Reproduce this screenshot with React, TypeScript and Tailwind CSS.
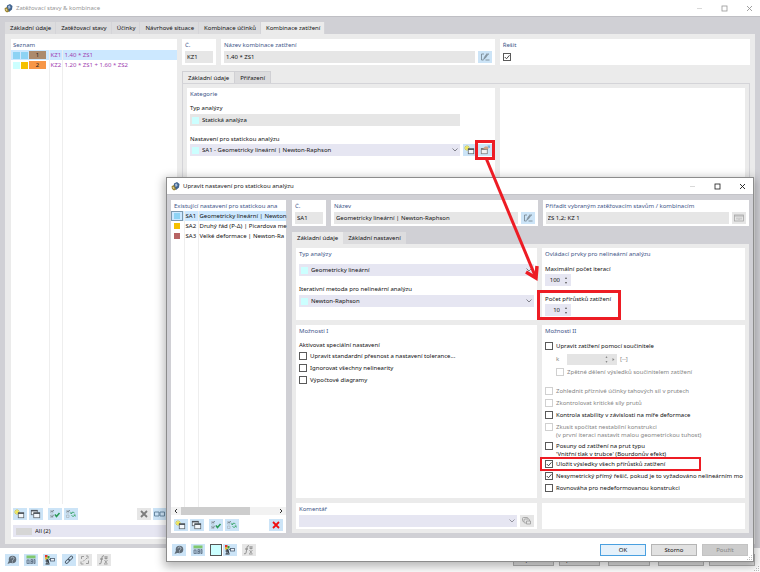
import { useState } from "react"
import type { ReactNode } from "react"
import { clsx } from "clsx"

/* ---------- icons ---------- */

function AppIcon() {
  return (
    <svg width="9" height="9" viewBox="0 0 18 18" className="shrink-0">
      <path d="M6 3 L12 0 L17 4 L16 11 L10 16 L5 11 Z" fill="#41648f" />
      <path d="M8 4 L12 3 L13 8 L9 10 Z" fill="#a9bdd6" />
      <path d="M1 9 L5 6 L8 10 L10 15 L6 17 L2 14 Z" fill="#9a8330" />
      <path d="M4 9 L7 12 L6 14 L3 12 Z" fill="#e8d9a0" />
    </svg>
  )
}

function NewIcon() {
  return (
    <svg width="14" height="12" viewBox="0 0 28 24">
      <path d="M8 2 V14 M2 8 H14 M4 4 L12 12 M12 4 L4 12" stroke="#d8c832" strokeWidth="1.6" />
      <circle cx="8" cy="8" r="3" fill="#f6e94a" />
      <rect x="10.5" y="9.5" width="11" height="10" fill="#f4f8fc" stroke="#5a6067" strokeWidth="1.5" />
      <path d="M10 10.5 H22" stroke="#464c54" strokeWidth="2.6" />
    </svg>
  )
}

function CopyIcon() {
  return (
    <svg width="14" height="12" viewBox="0 0 28 24">
      <rect x="4.5" y="4.5" width="12" height="9" fill="#f4f8fc" stroke="#5a6067" strokeWidth="1.5" />
      <path d="M4 5.5 H17" stroke="#464c54" strokeWidth="2.6" />
      <rect x="9.5" y="9.5" width="12" height="10" fill="#f4f8fc" stroke="#5a6067" strokeWidth="1.5" />
      <path d="M9 10.5 H22" stroke="#464c54" strokeWidth="2.6" />
    </svg>
  )
}

function CheckAllIcon() {
  return (
    <svg width="14" height="12" viewBox="0 0 28 24" fill="none">
      <path d="M5 5 H10 V10 H5 Z M5 14 H10 V19 H5 Z" stroke="#a4adb4" strokeWidth="1.2" />
      <path d="M6 6 L8 8 L12 4 M6 15 L8 18 L12 13" stroke="#66727c" strokeWidth="1.4" />
      <path d="M14 13 L17 17 L23 10" stroke="#2c9a57" strokeWidth="3" />
    </svg>
  )
}

function InvertIcon() {
  return (
    <svg width="14" height="12" viewBox="0 0 28 24" fill="none">
      <path d="M5 5 H10 V10 H5 Z M5 14 H10 V19 H5 Z" stroke="#a4adb4" strokeWidth="1.2" />
      <path d="M6 6 L8 8 L12 4" stroke="#66727c" strokeWidth="1.4" />
      <path d="M15 10 C16 8 19 8 21 10 M21 15 C20 17 17 17 15 15" stroke="#3aa56a" strokeWidth="2" />
      <path d="M13 7 V12 H17 Z M23 18 V13 H19 Z" fill="#3aa56a" />
    </svg>
  )
}

function CrossIcon({ color }: { color: string }) {
  return (
    <svg width="14" height="12" viewBox="0 0 28 24">
      <path d="M8 6 L20 18 M20 6 L8 18" stroke={color} strokeWidth="3.6" />
    </svg>
  )
}

function ColumnsIcon() {
  return (
    <svg width="14" height="12" viewBox="0 0 28 24">
      <path d="M3 8 H12 V16 H3 Z M14 8 H23 V16 H14 Z" fill="none" stroke="#5f7f99" strokeWidth="1.8" />
    </svg>
  )
}

function HelpIcon() {
  return (
    <svg width="14" height="12" viewBox="0 0 28 24">
      <circle cx="15" cy="11" r="7.5" fill="#5f6b76" />
      <path d="M8 13 L5 20 L13 17 Z" fill="#5f6b76" />
      <path d="M12 9 C12 5 18 5 18 9 C18 11 15 11 15 13.5 M15 15 V17" fill="none" stroke="#c9d6e2" strokeWidth="1.6" />
    </svg>
  )
}

function UnitsIcon() {
  return (
    <svg width="14" height="12" viewBox="0 0 28 24">
      <rect x="5" y="3" width="18" height="6" fill="#7fc86e" />
      <rect x="5" y="9" width="18" height="11" fill="#b3c9dc" />
      <path
        d="M6 12 H10 V19 H6 Z M14 11 H17 V15 H14 Z M14 15 H17 V19 H14 Z M20 11 H22 V19 H20 Z M12 18 V20"
        fill="none"
        stroke="#56687c"
        strokeWidth="1.4"
      />
    </svg>
  )
}

function TreeIcon() {
  return (
    <svg width="14" height="12" viewBox="0 0 28 24">
      <rect x="4" y="2" width="5" height="5" fill="#e0362c" />
      <rect x="9" y="4" width="4" height="5" fill="#3a9a3a" />
      <rect x="4" y="7" width="5" height="4" fill="#e8c020" />
      <path d="M8 10 V20 M5 20 H13 M9 11 L12 19 M5 14 H12" stroke="#2c3238" strokeWidth="2" />
      <rect x="15" y="9" width="8" height="5" fill="#eef4fa" stroke="#46586c" strokeWidth="1.6" />
      <path d="M11 11 H15" stroke="#46586c" strokeWidth="1.5" />
    </svg>
  )
}

function LinkIcon() {
  return (
    <svg width="14" height="12" viewBox="0 0 28 24" fill="none" stroke="#4b5a68" strokeWidth="2">
      <rect x="12" y="6" width="10" height="5" rx="2.5" transform="rotate(-45 17 8.5)" />
      <rect x="6" y="12" width="10" height="5" rx="2.5" transform="rotate(-45 11 14.5)" />
    </svg>
  )
}

function UnlinkIcon() {
  return (
    <svg width="14" height="12" viewBox="0 0 28 24" fill="none" stroke="#9b9b9b" strokeWidth="2">
      <path d="M7 10 V5 H12 M16 4 H20 V9 M21 13 V19 H16 M11 20 H6 V15 M10 15 L13 12 M15 11 L18 8" />
    </svg>
  )
}

function FormulaIcon() {
  return (
    <svg width="14" height="12" viewBox="0 0 28 24" fill="none" stroke="#848484" strokeWidth="2">
      <path d="M14 4 C10 2 10 8 9 13 C8 18 8 21 4 19 M6 10 H12" />
      <path d="M14 6 H22 M18 4 V11 M15 9 H21 M15 12 L20 19 M21 12 L15 19 M14 20 H21" strokeWidth="1.4" />
    </svg>
  )
}

function RenameIcon() {
  return (
    <svg width="14" height="12" viewBox="0 0 28 24" fill="none" stroke="#71808c" strokeWidth="1.6">
      <path d="M12 6 H7 V18 H11 M15 18 H23" />
      <path d="M11 17 L13 12 L18 5 L20 7 L15 14 Z" fill="#8a99a5" strokeWidth="1" />
      <path d="M20 6 H24" strokeDasharray="2 2" />
    </svg>
  )
}

function EditWindowIcon() {
  return (
    <svg width="14" height="12" viewBox="0 0 28 24">
      <rect x="6.5" y="9.5" width="12" height="10" fill="#f2f2f2" stroke="#787878" strokeWidth="1.5" />
      <path d="M6 10 H19" stroke="#6a6a6a" strokeWidth="3" />
      <path d="M10 9 L14 5 L19 5 L22 8 L17 11 Z" fill="#d0a184" />
      <path d="M19 3 H24 V8 H21 Z" fill="#7fb2e0" />
    </svg>
  )
}

function PickIcon() {
  return (
    <svg width="14" height="12" viewBox="0 0 28 24" fill="none" stroke="#a6a6a6" strokeWidth="1.6">
      <rect x="5" y="6" width="18" height="12" />
      <path d="M5 8 H23 M10 11 V15 M14 11 V16 M18 11 V15" />
    </svg>
  )
}

function LibraryIcon() {
  return (
    <svg width="14" height="12" viewBox="0 0 28 24" fill="#e4e4e4" stroke="#a2a2a2" strokeWidth="1.8">
      <rect x="5" y="5" width="11" height="8" rx="2" />
      <rect x="8" y="8" width="11" height="8" rx="2" />
      <path d="M13 12 H21 V18 H13 Z" />
    </svg>
  )
}

function Chevron({ muted }: { muted?: boolean }) {
  return (
    <svg width="6" height="4" viewBox="0 0 12 8" className="pointer-events-none shrink-0">
      <path d="M1 1 L6 6 L11 1" fill="none" stroke={muted ? "#8b8b96" : "#74747e"} strokeWidth="1.8" />
    </svg>
  )
}

function Grip() {
  return (
    <svg width="6" height="6" viewBox="0 0 6 6" fill="#bdbdbd" className="pointer-events-none">
      <path d="M4 0h1v1H4z M2 2h1v1H2z M4 2h1v1H4z M0 4h1v1H0z M2 4h1v1H2z M4 4h1v1H4z" />
    </svg>
  )
}

/* ---------- shared controls ---------- */

interface ToolButtonProps {
  label: string
  disabled?: boolean
  children: ReactNode
}

function ToolButton({ label, disabled, children }: ToolButtonProps) {
  return (
    <button
      type="button"
      aria-label={label}
      disabled={disabled}
      className={clsx("flex h-3 w-3.5 shrink-0 items-center justify-center", disabled ? "bg-[#e6e6e6]" : "bg-[#cce4f7]")}
    >
      {children}
    </button>
  )
}

interface TitleBarProps {
  title: string
  active?: boolean
}

function TitleBar({ title, active }: TitleBarProps) {
  return (
    <header
      className={clsx(
        "flex h-4 shrink-0 items-center gap-[3px] bg-white pl-1",
        active ? "text-[#1a1a1a]" : "text-[#969696]",
      )}
    >
      <AppIcon />
      <h1 className="flex-1">{title}</h1>
      <button type="button" aria-label="Minimalizovat" disabled className="flex w-[22px] justify-center">
        <svg width="7" height="7" viewBox="0 0 7 7">
          <path d="M1 3.5 H6" stroke="#d9d9d9" />
        </svg>
      </button>
      <button type="button" aria-label="Maximalizovat" className="flex w-[22px] justify-center">
        <svg width="7" height="7" viewBox="0 0 7 7">
          <rect x="1" y="1" width="5" height="5" fill="none" stroke="currentColor" strokeWidth="0.8" />
        </svg>
      </button>
      <button type="button" aria-label="Zavřít" className="flex w-[22px] justify-center">
        <svg width="7" height="7" viewBox="0 0 7 7">
          <path d="M1 1 L6 6 M6 1 L1 6" stroke="currentColor" strokeWidth="0.9" />
        </svg>
      </button>
    </header>
  )
}

interface PanelProps {
  title?: string
  className?: string
  children?: ReactNode
}

function Panel({ title, className, children }: PanelProps) {
  return (
    <section className={clsx("flex flex-col bg-white px-[3px] pb-[2px] pt-px", className)}>
      {title && <h2 className="h-2.5 shrink-0 whitespace-nowrap leading-[10px] text-[#3d5589]">{title}</h2>}
      {children}
    </section>
  )
}

interface FieldProps {
  label: string
  value: string
  swatch?: string
}

function ReadOnlyField({ label, value, swatch }: FieldProps) {
  return (
    <div className="flex h-3 min-w-0 flex-1 items-center bg-[#e6e6e6] px-[2px]">
      {swatch && <span className={clsx("mr-[3px] size-[7px] shrink-0", swatch)} />}
      <input aria-label={label} readOnly value={value} className="w-full min-w-0 bg-transparent outline-none" />
    </div>
  )
}

interface SelectFieldProps extends FieldProps {
  id: string
  muted?: boolean
}

function SelectField({ id, label, value, swatch, muted }: SelectFieldProps) {
  return (
    <div className="flex h-3 min-w-0 flex-1 items-center bg-[#e6e6f2] px-[2px]">
      {swatch && <span className={clsx("mr-[3px] size-[7px] shrink-0", swatch)} />}
      <select
        id={id}
        aria-label={label}
        disabled={muted}
        className="w-full min-w-0 flex-1 appearance-none bg-transparent outline-none"
      >
        <option>{value}</option>
      </select>
      <Chevron muted={muted} />
    </div>
  )
}

interface CheckProps {
  label: string
  hideLabel?: boolean
  checked?: boolean
  disabled?: boolean
  note?: string
}

function Check({ label, hideLabel, checked = false, disabled, note }: CheckProps) {
  const [on, setOn] = useState(checked)
  return (
    <label className={clsx("flex items-start gap-[3px]", disabled ? "text-[#858585]" : "text-[#111111]")}>
      <span className="grid shrink-0">
        <input
          type="checkbox"
          aria-label={hideLabel ? label : undefined}
          checked={on}
          disabled={disabled}
          onChange={(e) => setOn(e.target.checked)}
          className={clsx(
            "col-start-1 row-start-1 size-2 appearance-none border bg-white",
            disabled ? "border-[#d0d0d0]" : "border-[#5a5a5a]",
          )}
        />
        {on && (
          <svg width="8" height="8" viewBox="0 0 16 16" className="pointer-events-none col-start-1 row-start-1">
            <path d="M3.5 8 L7 11.5 L13 4.5" fill="none" stroke="#333333" strokeWidth="1.8" />
          </svg>
        )}
      </span>
      {!hideLabel && (
        <span className="whitespace-nowrap leading-2">
          {label}
          {note && (
            <>
              <br />
              {note}
            </>
          )}
        </span>
      )}
    </label>
  )
}

function Spinner({ id, label, initial }: { id: string; label: string; initial: number }) {
  const [value, setValue] = useState(initial)
  return (
    <div className="flex flex-col items-start">
      <label htmlFor={id} className="h-2.5 leading-[10px]">
        {label}
      </label>
      <div className="flex h-3 w-[26px] items-center bg-[#e6e6f2] pr-[2px]">
        <input
          id={id}
          inputMode="numeric"
          value={value}
          onChange={(e) => setValue(Number(e.target.value) || 0)}
          className="w-full min-w-0 flex-1 bg-transparent text-right outline-none"
        />
        <svg width="6" height="9" viewBox="0 0 12 18" className="ml-[3px] shrink-0" fill="#555555">
          <path d="M4 6 L6 2 L8 6 Z M4 12 L6 16 L8 12 Z" />
        </svg>
      </div>
    </div>
  )
}

interface TabsProps {
  label: string
  items: string[]
  active: string
  variant: "main" | "sub" | "dialog"
}

function Tabs({ label, items, active, variant }: TabsProps) {
  return (
    <div role="tablist" aria-label={label} className="flex h-3 shrink-0">
      {items.map((item) => (
        <button
          key={item}
          type="button"
          role="tab"
          aria-selected={item === active}
          className={clsx(
            "whitespace-nowrap",
            variant === "main" ? "border-r border-[#d4d4d8] pl-[5px] pr-1" : "px-[5px]",
            variant === "sub" && "border-r border-t border-[#d0d0d4] first:border-l",
            item === active ? "bg-[#ebebeb]" : "bg-[#dcdcde]",
          )}
        >
          {item}
        </button>
      ))}
    </div>
  )
}

/* ---------- background window ---------- */

const combinations = [
  { no: "1", id: "KZ1", name: "1.40 * ZS1", colors: ["bg-[#8dd3f4]", "bg-[#8dd3f4]", "bg-[#ac8a6c]"] },
  { no: "2", id: "KZ2", name: "1.20 * ZS1 + 1.60 * ZS2", colors: ["bg-[#ccffff]", "bg-[#f5c000]", "bg-[#f79646]"] },
]

function CombinationList() {
  return (
    <section className="flex w-[166px] shrink-0 flex-col bg-white pb-[2px] pt-px">
      <h2 className="h-2.5 pl-[2px] leading-[10px] text-[#3d5589]">Seznam</h2>
      <div className="grid flex-1">
        <table className="h-full w-full text-left text-[#a040b0]">
          <tbody>
            {combinations.map((row, i) => (
              <tr key={row.id} className={clsx("h-2.5", i === 0 && "bg-[#cce8ff]")}>
                <td className="w-[38px] p-0">
                  <span className="flex items-center gap-px pl-[2px]">
                    <span className={clsx("size-[7px]", row.colors[0])} />
                    <span className={clsx("size-[7px]", row.colors[1])} />
                    <span className={clsx("h-2 w-[17px] text-center leading-2 text-[#1a1a1a]", row.colors[2])}>
                      {row.no}
                    </span>
                  </span>
                </td>
                <td className="w-[13px] border-x border-[#eeeeee] p-0 pl-px leading-2">{row.id}</td>
                <td className="p-0 pl-[2px] leading-2">{row.name}</td>
              </tr>
            ))}
            <tr>
              <td className="p-0" />
              <td className="border-x border-[#eeeeee] p-0" />
              <td className="p-0" />
            </tr>
          </tbody>
        </table>
      </div>
      <div className="flex items-center gap-[2px] pb-[5px] pl-[2px] pr-2.5 pt-1">
        <ToolButton label="Nový">
          <NewIcon />
        </ToolButton>
        <ToolButton label="Kopírovat">
          <CopyIcon />
        </ToolButton>
        <span className="w-px" />
        <ToolButton label="Vybrat vše">
          <CheckAllIcon />
        </ToolButton>
        <ToolButton label="Obrátit výběr">
          <InvertIcon />
        </ToolButton>
        <span className="flex-1" />
        <ToolButton label="Smazat" disabled>
          <CrossIcon color="#7c7c7c" />
        </ToolButton>
        <ToolButton label="Sloupce">
          <ColumnsIcon />
        </ToolButton>
      </div>
      <div className="mx-[2px] flex h-3 items-center bg-[#e6e6f2] px-[3px]">
        <span className="mr-[3px] h-[7px] w-4 bg-[#d6d6d6]" />
        <select aria-label="Filtr" className="flex-1 appearance-none bg-transparent outline-none">
          <option>All (2)</option>
        </select>
      </div>
    </section>
  )
}

function CombinationDetail() {
  return (
    <div className="flex min-w-0 flex-1 flex-col">
      <div className="flex gap-[5px]">
        <Panel title="Č." className="w-[34px]">
          <div className="flex pt-px">
            <ReadOnlyField label="Č." value="KZ1" />
          </div>
        </Panel>
        <Panel title="Název kombinace zatížení" className="min-w-0 flex-[274]">
          <div className="flex gap-[3px] pt-px">
            <ReadOnlyField label="Název kombinace zatížení" value="1.40 * ZS1" />
            <ToolButton label="Upravit název">
              <RenameIcon />
            </ToolButton>
          </div>
        </Panel>
        <Panel title="Řešit" className="min-w-0 flex-[250]">
          <div className="pt-[3px]">
            <Check label="Řešit" hideLabel checked />
          </div>
        </Panel>
      </div>
      <div className="pt-[6px]">
        <Tabs label="Kombinace" items={["Základní údaje", "Přiřazení"]} active="Základní údaje" variant="sub" />
      </div>
      <div className="flex flex-1 gap-[5px] border border-[#d4d4d8] p-1">
        <Panel title="Kategorie" className="min-w-0 flex-[309]">
          <p className="mt-1 h-2.5 leading-[10px]">Typ analýzy</p>
          <div className="mt-px flex pr-8">
            <ReadOnlyField label="Typ analýzy" value="Statická analýza" swatch="bg-[#ccffff]" />
          </div>
          <label htmlFor="sa-settings" className="mt-2 h-2.5 leading-[10px]">
            Nastavení pro statickou analýzu
          </label>
          <div className="flex">
            <SelectField
              id="sa-settings"
              label="Nastavení pro statickou analýzu"
              value="SA1 - Geometricky lineární | Newton-Raphson"
              swatch="bg-[#ccffff]"
            />
            <div className="ml-[3px] flex gap-px">
              <ToolButton label="Nové nastavení">
                <NewIcon />
              </ToolButton>
              <div className="relative">
                <ToolButton label="Upravit nastavení">
                  <EditWindowIcon />
                </ToolButton>
                <span className="pointer-events-none absolute -inset-x-[3px] -inset-y-1 border-[3px] border-[#ed1c24]" />
              </div>
            </div>
          </div>
        </Panel>
        <Panel className="min-w-0 flex-[245]" />
      </div>
    </div>
  )
}

const mainActions = [
  { label: "Spočítat", width: "w-[41px]" },
  { label: "Spočítat vše", width: "w-[41px] mr-[3px]" },
  { label: "OK", width: "w-[42px] mr-[3px]" },
  { label: "Storno", width: "w-[46px]" },
  { label: "Použít", width: "w-[46px]" },
]

function MainWindow() {
  return (
    <main className="flex min-h-screen flex-col bg-[#d0d0d5]">
      <TitleBar title="Zatěžovací stavy & kombinace" />
      <div className="flex flex-1 flex-col border-t border-[#bfbfc4] px-[5px] pb-1 pt-[5px]">
        <Tabs
          label="Zatížení"
          items={[
            "Základní údaje",
            "Zatěžovací stavy",
            "Účinky",
            "Návrhové situace",
            "Kombinace účinků",
            "Kombinace zatížení",
          ]}
          active="Kombinace zatížení"
          variant="main"
        />
        <div className="flex flex-1 gap-[5px] bg-[#ebebeb] py-[5px] pl-[6px] pr-[5px]">
          <CombinationList />
          <CombinationDetail />
        </div>
      </div>
      <footer className="relative flex h-6 items-center gap-[5px] bg-white px-[5px]">
        <ToolButton label="Nápověda">
          <HelpIcon />
        </ToolButton>
        <ToolButton label="Jednotky">
          <UnitsIcon />
        </ToolButton>
        <ToolButton label="Strom">
          <TreeIcon />
        </ToolButton>
        <div className="flex gap-[2px]">
          <ToolButton label="Propojit">
            <LinkIcon />
          </ToolButton>
          <ToolButton label="Rozpojit" disabled>
            <UnlinkIcon />
          </ToolButton>
        </div>
        <ToolButton label="Vzorec" disabled>
          <FormulaIcon />
        </ToolButton>
        <span className="flex-1" />
        {mainActions.map((action) => (
          <button
            key={action.label}
            type="button"
            className={clsx("h-3 whitespace-nowrap border border-[#b5b5b5] bg-[#e1e1e1] leading-[10px]", action.width)}
          >
            {action.label}
          </button>
        ))}
        <span className="absolute bottom-0 right-0">
          <Grip />
        </span>
      </footer>
    </main>
  )
}

/* ---------- dialog ---------- */

const settings = [
  { id: "SA1", name: "Geometricky lineární | Newton", color: "bg-[#8dd3f4]" },
  { id: "SA2", name: "Druhý řád (P-Δ) | Picardova me", color: "bg-[#f5c000]" },
  { id: "SA3", name: "Velké deformace | Newton-Ra", color: "bg-[#b86464]" },
]

function SettingsList() {
  return (
    <section className="flex w-[115px] shrink-0 flex-col bg-white pb-[2px] pt-px">
      <h2 className="h-2.5 whitespace-nowrap pl-[3px] leading-[10px] text-[#3d5589]">
        Existující nastavení pro statickou ana
      </h2>
      <div className="grid flex-1">
        <table className="h-full w-full table-fixed text-left">
          <colgroup>
            <col className="w-[13px]" />
            <col className="w-[14px]" />
            <col />
          </colgroup>
          <tbody>
            {settings.map((row, i) => (
              <tr key={row.id} className={clsx("h-2.5", i === 0 && "bg-[#cce8ff]")}>
                <td className="p-0">
                  <span
                    className={clsx(
                      "flex h-2.5 w-3 items-center justify-center border",
                      i === 0 ? "border-[#7c98ad]" : "border-transparent",
                    )}
                  >
                    <span className={clsx("size-[6px]", row.color)} />
                  </span>
                </td>
                <td className="border-x border-[#eeeeee] p-0 pl-px leading-2">{row.id}</td>
                <td className="whitespace-nowrap p-0 pl-px leading-2">{row.name}</td>
              </tr>
            ))}
            <tr>
              <td className="p-0" />
              <td className="border-x border-[#eeeeee] p-0" />
              <td className="p-0" />
            </tr>
          </tbody>
        </table>
      </div>
      <div className="flex h-2 items-center bg-[#f2f2f2]">
        <svg width="10" height="8" viewBox="0 0 20 16">
          <path d="M12 4 L8 8 L12 12" fill="none" stroke="#333333" strokeWidth="2" />
        </svg>
        <div className="flex h-full flex-1">
          <span className="h-full w-[73%] bg-[#cdcdcd]" />
        </div>
        <svg width="10" height="8" viewBox="0 0 20 16">
          <path d="M8 4 L12 8 L8 12" fill="none" stroke="#333333" strokeWidth="2" />
        </svg>
      </div>
      <div className="flex items-center gap-[2px] px-[3px] pt-1">
        <ToolButton label="Nový">
          <NewIcon />
        </ToolButton>
        <ToolButton label="Kopírovat">
          <CopyIcon />
        </ToolButton>
        <span className="w-px" />
        <ToolButton label="Vybrat vše">
          <CheckAllIcon />
        </ToolButton>
        <ToolButton label="Obrátit výběr">
          <InvertIcon />
        </ToolButton>
        <span className="flex-1" />
        <ToolButton label="Smazat">
          <CrossIcon color="#f01010" />
        </ToolButton>
      </div>
    </section>
  )
}

function OptionsTwo() {
  return (
    <Panel title="Možnosti II" className="h-[173px] min-w-0 flex-[202]">
      <div className="mt-[6px] flex flex-col gap-1">
        <Check label="Upravit zatížení pomocí součinitele" />
        <div className="flex h-2.5 items-center pl-[11px] text-[#858585]">
          <label htmlFor="factor" className="w-[11px]">
            k
          </label>
          <div className="flex h-[11px] w-[50px] items-center bg-[#e4e4e4]">
            <input id="factor" disabled className="w-full min-w-0 flex-1 bg-transparent" />
            <svg width="14" height="9" viewBox="0 0 28 18" fill="#8a8a8a" className="shrink-0">
              <path d="M5 6 L7 2 L9 6 Z M5 12 L7 16 L9 12 Z M19 6 L23 9 L19 12 Z" />
            </svg>
          </div>
          <span className="pl-[3px]">[--]</span>
        </div>
        <div className="pl-[11px]">
          <Check label="Zpětné dělení výsledků součinitelem zatížení" disabled />
        </div>
      </div>
      <div className="mt-[11px] flex flex-col gap-1">
        <Check label="Zohlednit příznivé účinky tahových sil v prutech" disabled />
        <Check label="Zkontrolovat kritické síly prutů" disabled />
        <Check label="Kontrola stability v závislosti na míře deformace" />
        <Check
          label="Zkusit spočítat nestabilní konstrukci"
          note="(v první iteraci nastavit malou geometrickou tuhost)"
          disabled
        />
      </div>
      <div className="mt-[3px] flex flex-col gap-[2px]">
        <Check label="Posuny od zatížení na prut typu" note="'Vnitřní tlak v trubce' (Bourdonův efekt)" />
        <div className="relative">
          <Check label="Uložit výsledky všech přírůstků zatížení" checked />
          <span className="pointer-events-none absolute -inset-y-[3px] -left-[5px] w-[161px] border-2 border-[#ed1c24]" />
        </div>
      </div>
      <div className="mt-1 flex flex-col gap-1">
        <Check label="Nesymetrický přímý řešič, pokud je to vyžadováno nelineárním mo" checked />
        <Check label="Rovnováha pro nedeformovanou konstrukci" />
      </div>
    </Panel>
  )
}

function SettingsDialog() {
  return (
    <div
      role="dialog"
      aria-label="Upravit nastavení pro statickou analýzu"
      className="absolute left-[166px] right-[6px] top-[177px] flex flex-col border border-[#8c8c8c] bg-[#d0d0d5] shadow-[0_3px_9px_2px_rgba(0,0,0,0.28)]"
    >
      <TitleBar title="Upravit nastavení pro statickou analýzu" active />
      <div className="flex gap-[6px] border-t border-[#c4c4c9] px-1 py-[5px]">
        <SettingsList />
        <div className="flex min-w-0 flex-1 flex-col">
          <div className="flex gap-[5px]">
            <Panel title="Č." className="w-[34px]">
              <div className="flex pt-px">
                <ReadOnlyField label="Č." value="SA1" />
              </div>
            </Panel>
            <Panel title="Název" className="min-w-0 flex-[207]">
              <div className="flex gap-[3px] pt-px">
                <ReadOnlyField label="Název" value="Geometricky lineární | Newton-Raphson" />
                <ToolButton label="Upravit název">
                  <RenameIcon />
                </ToolButton>
              </div>
            </Panel>
            <Panel title="Přiřadit vybraným zatěžovacím stavům / kombinacím" className="min-w-0 flex-[207]">
              <div className="flex gap-[3px] pt-px">
                <ReadOnlyField label="Přiřadit vybraným zatěžovacím stavům / kombinacím" value="ZS 1,2; KZ 1" />
                <ToolButton label="Vybrat" disabled>
                  <PickIcon />
                </ToolButton>
              </div>
            </Panel>
          </div>
          <div className="pt-[6px]">
            <Tabs label="Nastavení" items={["Základní údaje", "Základní nastavení"]} active="Základní údaje" variant="dialog" />
          </div>
          <div className="flex flex-1 flex-col gap-[5px] bg-[#ebebeb] p-1">
            <div className="flex gap-[5px]">
              <Panel title="Typ analýzy" className="h-[72px] min-w-0 flex-[241]">
                <div className="mt-[5px] flex">
                  <SelectField id="analysis" label="Typ analýzy" value="Geometricky lineární" swatch="bg-[#ccffff]" />
                </div>
                <label htmlFor="method" className="mt-2 h-2.5 leading-[10px]">
                  Iterativní metoda pro nelineární analýzu
                </label>
                <div className="mt-px flex">
                  <SelectField
                    id="method"
                    label="Iterativní metoda pro nelineární analýzu"
                    value="Newton-Raphson"
                    swatch="bg-[#ccffff]"
                  />
                </div>
              </Panel>
              <Panel title="Ovládací prvky pro nelineární analýzu" className="h-[72px] min-w-0 flex-[202]">
                <div className="mt-[5px] flex flex-col gap-2">
                  <Spinner id="iterations" label="Maximální počet iterací" initial={100} />
                  <div className="relative">
                    <Spinner id="increments" label="Počet přírůstků zatížení" initial={10} />
                    <span className="pointer-events-none absolute -inset-y-1 -left-2 w-[84px] border-[3px] border-[#ed1c24]" />
                  </div>
                </div>
              </Panel>
            </div>
            <div className="flex gap-[5px]">
              <Panel title="Možnosti I" className="h-[173px] min-w-0 flex-[241]">
                <p className="mt-1 h-2.5 leading-[10px]">Aktivovat speciální nastavení</p>
                <div className="mt-[2px] flex flex-col gap-1">
                  <Check label="Upravit standardní přesnost a nastavení tolerance..." />
                  <Check label="Ignorovat všechny nelinearity" />
                  <Check label="Výpočtové diagramy" />
                </div>
              </Panel>
              <OptionsTwo />
            </div>
            <div className="flex gap-[5px]">
              <Panel title="Komentář" className="min-w-0 flex-[241]">
                <div className="flex gap-[3px] pt-px">
                  <SelectField id="comment" label="Komentář" value="" muted />
                  <ToolButton label="Knihovna komentářů" disabled>
                    <LibraryIcon />
                  </ToolButton>
                </div>
              </Panel>
              <Panel className="min-w-0 flex-[202]" />
            </div>
          </div>
        </div>
      </div>
      <footer className="relative flex h-[23px] items-center gap-[5px] bg-white px-[5px]">
        <ToolButton label="Nápověda">
          <HelpIcon />
        </ToolButton>
        <ToolButton label="Jednotky">
          <UnitsIcon />
        </ToolButton>
        <div className="flex gap-px">
          <button type="button" aria-label="Barva" className="size-3 border border-[#555555] bg-[#ccffff]" />
          <ToolButton label="Strom">
            <TreeIcon />
          </ToolButton>
        </div>
        <ToolButton label="Vzorec" disabled>
          <FormulaIcon />
        </ToolButton>
        <span className="flex-1" />
        <button type="button" className="h-3 w-[46px] border border-[#4aa0e0] bg-[#e5f1fb] leading-[10px]">
          OK
        </button>
        <button type="button" className="h-3 w-[46px] border border-[#b5b5b5] bg-[#e1e1e1] leading-[10px]">
          Storno
        </button>
        <button
          type="button"
          disabled
          className="h-3 w-[46px] border border-[#c3c3c3] bg-[#cccccc] leading-[10px] text-[#838383]"
        >
          Použít
        </button>
        <span className="absolute bottom-0 right-0">
          <Grip />
        </span>
      </footer>
    </div>
  )
}

export default function App() {
  return (
    <div className="relative font-['Noto_Sans','Open_Sans',sans-serif] text-[6px] leading-2 text-[#111111]">
      <MainWindow />
      <SettingsDialog />
      <svg
        width="60"
        height="126"
        viewBox="0 0 60 126"
        fill="none"
        stroke="#ed1c24"
        className="pointer-events-none absolute left-[482px] top-[157px]"
      >
        <path d="M4 1 L54 121" strokeWidth="3" />
        <path d="M44 115 L54 121 L55 109" strokeWidth="3.5" />
      </svg>
    </div>
  )
}
